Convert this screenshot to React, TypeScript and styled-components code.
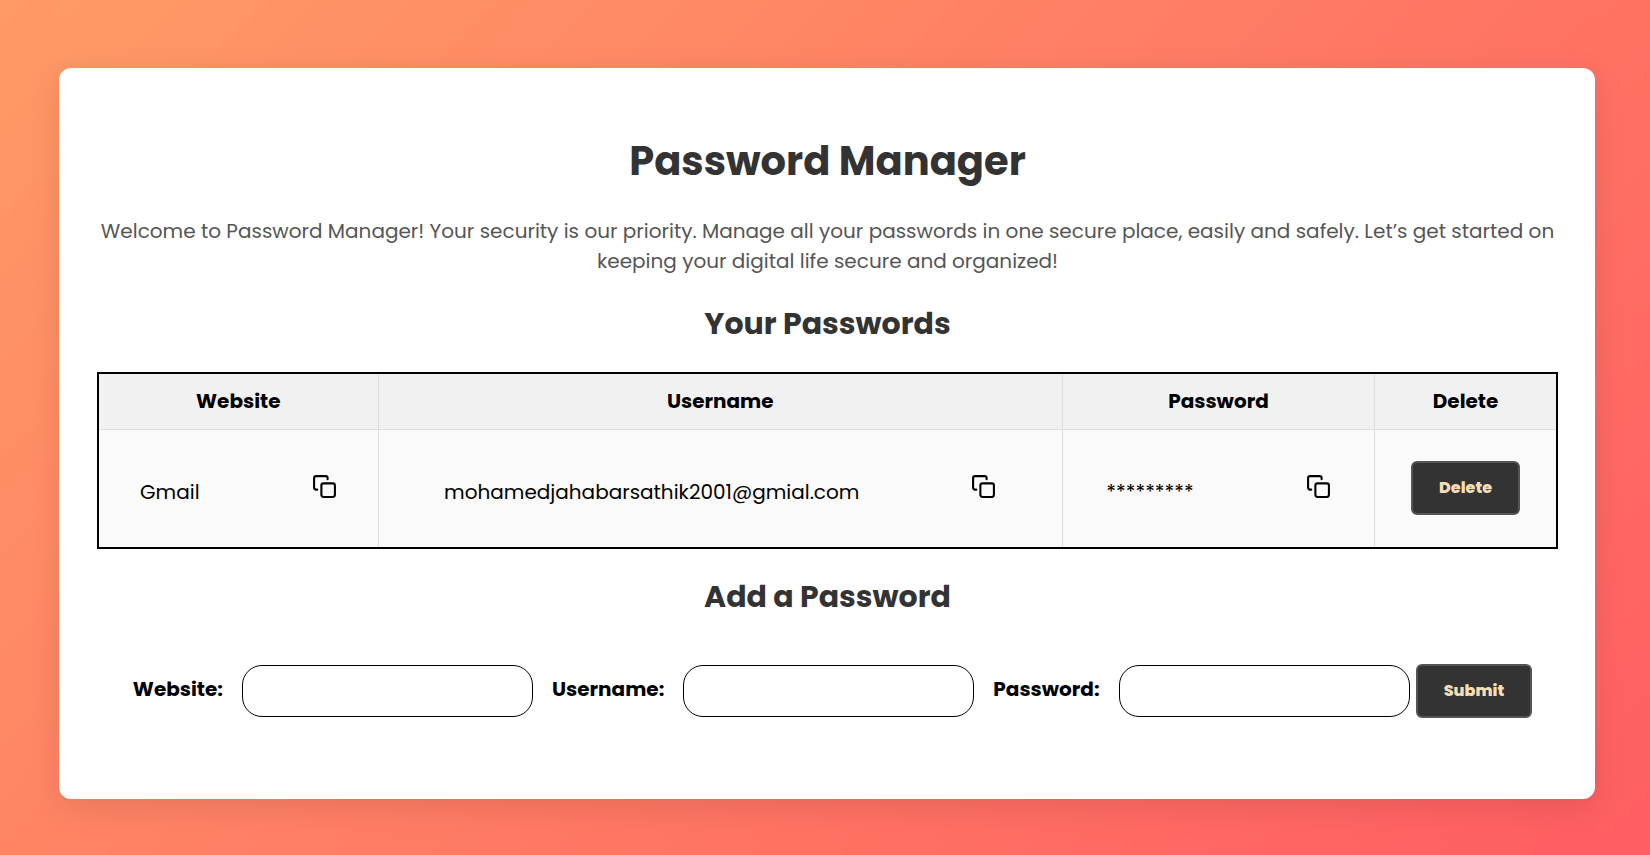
import React, { useState } from "react";
import styled, { createGlobalStyle } from "styled-components";
import { FiCopy } from "react-icons/fi";

const sunset = "linear-gradient(135deg, #ff9966, #ff5e62)";

const GlobalStyle = createGlobalStyle`
  * {
    box-sizing: border-box;
  }

  body {
    margin: 0;
    color: #000;
    font-family: Poppins, Inter, "Open Sans", sans-serif;
    font-size: 20px;
    line-height: 30px;
  }
`;

const Page = styled.div`
  display: flex;
  flex-direction: column;
  min-height: 100vh;
  padding: 0 55px 0 59px;
  background: ${sunset};
`;

const Container = styled.div`
  flex: 1;
  padding: 68px 0 56px;
  background: ${sunset};
`;

const Card = styled.main`
  display: flex;
  flex-direction: column;
  padding: 63px 37px 81px 38px;
  background: #fff;
  border-radius: 12px;
  box-shadow: 0 8px 32px rgba(0, 0, 0, 0.1);
`;

const Title = styled.h1`
  margin: 0;
  color: #333;
  font-size: 40px;
  line-height: 60px;
  font-weight: 700;
  text-align: center;
`;

const Intro = styled.p`
  margin: 25px 0 0;
  color: #555;
  text-align: center;
`;

const SectionTitle = styled.h2`
  margin: 24px 0;
  color: #333;
  font-size: 30px;
  line-height: 48px;
  font-weight: 700;
  text-align: center;
`;

const Table = styled.table`
  width: 100%;
  table-layout: fixed;
  border: 2px solid #000;
  border-collapse: collapse;
`;

const Column = styled.col<{ $share: number }>`
  width: ${({ $share }) => $share}%;
`;

const HeadCell = styled.th`
  padding: 12px 12px 13px;
  background: #f1f1f1;
  border: 1px solid #ddd;
  font-weight: 700;
`;

const Cell = styled.td`
  height: 118px;
  padding: 0;
  background: #fafafa;
  border: 1px solid #ddd;
  text-align: center;
`;

const Value = styled.div`
  display: flex;
  align-items: baseline;
  justify-content: center;
  gap: 112px;
  padding-top: 4px;
`;

const CopyButton = styled.button`
  display: flex;
  padding: 0;
  background: none;
  border: 0;
  color: #000;
  cursor: pointer;
`;

const Button = styled.button`
  padding: 10px 26px;
  background: #333;
  border: 2px solid #555;
  border-radius: 6px;
  color: #f5deb3;
  font: inherit;
  font-size: 16px;
  font-weight: 800;
  cursor: pointer;
`;

const Form = styled.form`
  display: flex;
  align-items: center;
  justify-content: center;
  padding: 19px 0 0 10px;
  gap: 6px;
`;

const Fields = styled.div`
  display: flex;
  align-items: center;
  gap: 19px;
`;

const Label = styled.label`
  padding-bottom: 4px;
  font-weight: 700;
`;

const Input = styled.input`
  width: 291px;
  min-width: 0;
  height: 52px;
  padding: 0 16px;
  background: #fff;
  border: 1px solid #000;
  border-radius: 20px;
  font: inherit;
`;

type Entry = { website: string; username: string; password: string };

const columns = [
  { name: "Website", share: 19.2 },
  { name: "Username", share: 46.9 },
  { name: "Password", share: 21.4 },
  { name: "Delete", share: 12.5 },
];

const fields: { key: keyof Entry; label: string; type: string }[] = [
  { key: "website", label: "Website:", type: "text" },
  { key: "username", label: "Username:", type: "text" },
  { key: "password", label: "Password:", type: "password" },
];

const empty: Entry = { website: "", username: "", password: "" };

function Copyable({ label, value, shown }: { label: string; value: string; shown: string }) {
  return (
    <Cell>
      <Value>
        <span>{shown}</span>
        <CopyButton
          type="button"
          aria-label={`Copy ${label}`}
          onClick={() => navigator.clipboard?.writeText(value)}
        >
          <FiCopy size={25} />
        </CopyButton>
      </Value>
    </Cell>
  );
}

export default function App() {
  const [entries, setEntries] = useState<Entry[]>([
    { website: "Gmail", username: "mohamedjahabarsathik2001@gmial.com", password: "012345678" },
  ]);
  const [draft, setDraft] = useState<Entry>(empty);

  const submit = (event: React.FormEvent) => {
    event.preventDefault();
    setEntries([...entries, draft]);
    setDraft(empty);
  };

  return (
    <Page>
      <GlobalStyle />
      <Container>
        <Card>
          <Title>Password Manager</Title>
          <Intro>
            Welcome to Password Manager! Your security is our priority. Manage all your passwords
            in one secure place, easily and safely. Let’s get started on keeping your digital life
            secure and organized!
          </Intro>
          <SectionTitle>Your Passwords</SectionTitle>
          <Table>
            <colgroup>
              {columns.map((column) => (
                <Column key={column.name} $share={column.share} />
              ))}
            </colgroup>
            <thead>
              <tr>
                {columns.map((column) => (
                  <HeadCell key={column.name} scope="col">
                    {column.name}
                  </HeadCell>
                ))}
              </tr>
            </thead>
            <tbody>
              {entries.map((entry, index) => (
                <tr key={index}>
                  <Copyable label="website" value={entry.website} shown={entry.website} />
                  <Copyable label="username" value={entry.username} shown={entry.username} />
                  <Copyable
                    label="password"
                    value={entry.password}
                    shown={"*".repeat(entry.password.length)}
                  />
                  <Cell>
                    <Button
                      type="button"
                      onClick={() => setEntries(entries.filter((_, i) => i !== index))}
                    >
                      Delete
                    </Button>
                  </Cell>
                </tr>
              ))}
            </tbody>
          </Table>
          <SectionTitle>Add a Password</SectionTitle>
          <Form onSubmit={submit}>
            <Fields>
              {fields.map((field) => (
                <React.Fragment key={field.key}>
                  <Label htmlFor={field.key}>{field.label}</Label>
                  <Input
                    id={field.key}
                    type={field.type}
                    value={draft[field.key]}
                    onChange={(event) => setDraft({ ...draft, [field.key]: event.target.value })}
                  />
                </React.Fragment>
              ))}
            </Fields>
            <Button type="submit">Submit</Button>
          </Form>
        </Card>
      </Container>
    </Page>
  );
}
